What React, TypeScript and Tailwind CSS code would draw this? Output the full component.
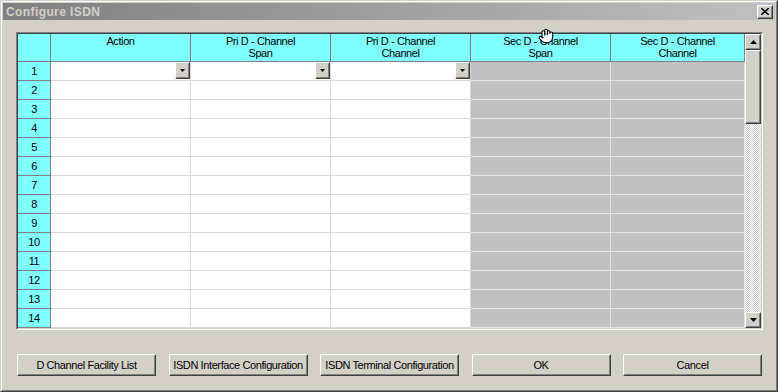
import { Hand } from 'lucide-react'

const columns = [
  { key: 'action', width: 'w-[140px]', line1: 'Action', line2: '', dropdown: true, disabled: false },
  { key: 'priSpan', width: 'w-[140px]', line1: 'Pri D - Channel', line2: 'Span', dropdown: true, disabled: false },
  { key: 'priChan', width: 'w-[140px]', line1: 'Pri D - Channel', line2: 'Channel', dropdown: true, disabled: false },
  { key: 'secSpan', width: 'w-[140px]', line1: 'Sec D - Channel', line2: 'Span', dropdown: false, disabled: true },
  { key: 'secChan', width: 'w-[134px]', line1: 'Sec D - Channel', line2: 'Channel', dropdown: false, disabled: true },
]

const rows = Array.from({ length: 14 }, (_, i) => i + 1)

const buttons = [
  'D Channel Facility List',
  'ISDN Interface Configuration',
  'ISDN Terminal Configuration',
  'OK',
  'Cancel',
]

// classic 3d raised box
function Raised({ className = '', children }: { className?: string; children?: React.ReactNode }) {
  return (
    <div
      className={`border border-t-white border-l-white border-b-[#404040] border-r-[#404040] ${className}`}
    >
      <div className="flex h-full w-full items-center justify-center border border-t-[#d4d0c8] border-l-[#d4d0c8] border-b-[#808080] border-r-[#808080] bg-[#d4d0c8]">
        {children}
      </div>
    </div>
  )
}

function Arrow({ up }: { up?: boolean }) {
  return (
    <svg width="7" height="4" viewBox="0 0 7 4" className={up ? '' : 'rotate-180'}>
      <path d="M3.5 0 L7 4 L0 4 Z" fill="#000" />
    </svg>
  )
}

function DropButton() {
  return (
    <Raised className="h-[17px] w-[15px] shrink-0">
      <svg width="5" height="3" viewBox="0 0 5 3">
        <path d="M0 0 L5 0 L2.5 3 Z" fill="#000" />
      </svg>
    </Raised>
  )
}

export default function App() {
  return (
    <div className="relative h-[392px] w-[778px] overflow-hidden border border-t-[#d4d0c8] border-l-[#d4d0c8] border-b-[#404040] border-r-[#404040] font-['Liberation_Sans',Arial,sans-serif] text-[11px] tracking-[-0.4px] text-black">
      <div className="flex h-full w-full flex-col border border-t-white border-l-white border-b-[#808080] border-r-[#808080] bg-[#d4d0c8] p-px">
        {/* title bar */}
        <div className="flex h-[17px] shrink-0 items-center justify-between bg-gradient-to-r from-[#808080] to-[#c0c0c0] pl-[3px] pr-[2px]">
          <span className="text-[12px] font-bold tracking-[0.4px] text-[#d4d0c8]">Configure ISDN</span>
          <Raised className="h-[14px] w-[16px]">
            <svg width="8" height="7" viewBox="0 0 8 7">
              <path d="M0 0 L8 7 M8 0 L0 7" stroke="#000" strokeWidth="1.6" />
            </svg>
          </Raised>
        </div>

        {/* grid */}
        <div className="ml-[13px] mt-[12px] h-[298px] w-[747px] border border-t-[#808080] border-l-[#808080] border-b-white border-r-white">
          <div className="flex h-full w-full border border-t-[#404040] border-l-[#404040] border-b-[#d4d0c8] border-r-[#d4d0c8] bg-white">
            <div className="w-[727px] overflow-hidden">
              {/* header */}
              <div className="flex h-[28px]">
                <div className="h-full w-[33px] shrink-0 border-b border-r border-[#808080] bg-[#80ffff]" />
                {columns.map((c) => (
                  <div
                    key={c.key}
                    className={`${c.width} flex h-full shrink-0 flex-col items-center border-b border-r border-[#808080] bg-[#80ffff] pt-px leading-[12px]`}
                  >
                    <span>{c.line1}</span>
                    {c.line2 && <span>{c.line2}</span>}
                  </div>
                ))}
              </div>
              {/* body */}
              {rows.map((r) => (
                <div key={r} className="flex h-[19px]">
                  <div className="flex h-full w-[33px] shrink-0 items-center justify-center border-b border-r border-[#808080] bg-[#80ffff]">
                    {r}
                  </div>
                  {columns.map((c) => (
                    <div
                      key={c.key}
                      className={`${c.width} flex h-full shrink-0 justify-end border-b border-r ${
                        c.disabled ? 'border-[#e4e4e4] bg-[#c0c0c0]' : 'border-[#d8d8d8] bg-white'
                      }`}
                    >
                      {r === 1 && c.dropdown && <DropButton />}
                    </div>
                  ))}
                </div>
              ))}
            </div>

            {/* scrollbar */}
            <div className="flex w-[16px] shrink-0 flex-col">
              <Raised className="h-[16px] w-[16px] shrink-0">
                <Arrow up />
              </Raised>
              <Raised className="h-[74px] w-[16px] shrink-0" />
              <div className="flex-1 bg-[repeating-conic-gradient(#d4d0c8_0%_25%,#ffffff_0%_50%)] bg-size-[2px_2px]" />
              <Raised className="h-[16px] w-[16px] shrink-0">
                <Arrow />
              </Raised>
            </div>
          </div>
        </div>

        {/* buttons */}
        <div className="ml-[14px] mt-[24px] flex w-[745px] justify-between">
          {buttons.map((b) => (
            <Raised key={b} className="h-[22px] w-[139px]">
              <span>{b}</span>
            </Raised>
          ))}
        </div>
      </div>

      <Hand className="absolute left-[537px] top-[27px] h-[16px] w-[16px]" fill="#fff" stroke="#000" strokeWidth={1.6} />
    </div>
  )
}
